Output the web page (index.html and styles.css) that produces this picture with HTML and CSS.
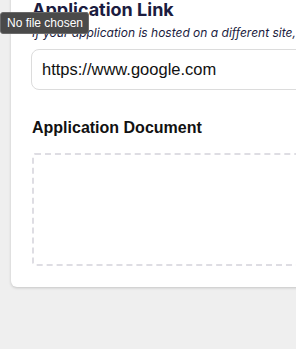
FILE: index.html
```html
<!DOCTYPE html>
<html>

<head lang="en">
    <meta charset="UTF-8">
    <title>Application</title>
    <link rel="stylesheet" href="styles.css">
</head>

<body>
    <div class="page">
        <div class="card">
            <div class="field">
                <h3 class="label">Application Link</h3>
                <p class="hint">If your application is hosted on a different site, paste the link here</p>
                <input class="text-input" type="text" value="https://www.google.com">
            </div>
            <div class="field">
                <h3 class="label label-dark">Application Document</h3>
                <div class="dropzone"></div>
            </div>
        </div>
    </div>
    <div class="tooltip">No file chosen</div>
</body>

</html>
```

FILE: styles.css
```css
body,
h3,
p {
    margin: 0;
    padding: 0;
}

body {
    background: #efefef;
    font-family: Inter, "Liberation Sans", sans-serif;
    overflow: hidden;
    width: 296px;
    height: 349px;
    position: relative;
}

.page {
    padding-left: 11px;
}

.card {
    width: 420px;
    margin-top: -10px;
    background: #fff;
    border-radius: 0 0 0 6px;
    box-shadow: 0 1px 3px rgba(0, 0, 0, 0.18);
    padding: 8px 0 21px 21px;
    display: flex;
    flex-direction: column;
    gap: 26px;
}

.label {
    font-size: 18px;
    font-weight: 700;
    color: #1b1c40;
    line-height: 24px;
    margin-bottom: 3px;
}

.label-dark {
    font-family: "Liberation Sans", Arial, sans-serif;
    font-size: 16px;
    color: #111;
    margin-bottom: 0;
}

.hint {
    font-size: 12px;
    font-style: italic;
    color: #1b1c40;
    line-height: 16px;
    white-space: nowrap;
}

.text-input {
    display: block;
    margin: 8px 0 0 -1px;
    width: 400px;
    height: 41px;
    box-sizing: border-box;
    border: 1px solid #dcdcdc;
    border-radius: 8px;
    padding: 0 10px;
    font-family: "Liberation Sans", Arial, sans-serif;
    font-size: 16.5px;
    color: #111;
    outline: none;
}

.dropzone {
    margin-top: 13px;
    height: 109px;
    border: 2px dashed #dedde3;
    border-right: none;
    border-radius: 3px 0 0 3px;
}

.tooltip {
    position: absolute;
    left: 0;
    top: 12px;
    height: 22px;
    padding: 0 5px 0 6px;
    background: #4a4a4a;
    border: 1px solid #6a6a6a;
    border-radius: 3px;
    box-sizing: border-box;
    color: #fff;
    font-family: "Liberation Sans", Arial, sans-serif;
    font-size: 12px;
    line-height: 20px;
}
```
